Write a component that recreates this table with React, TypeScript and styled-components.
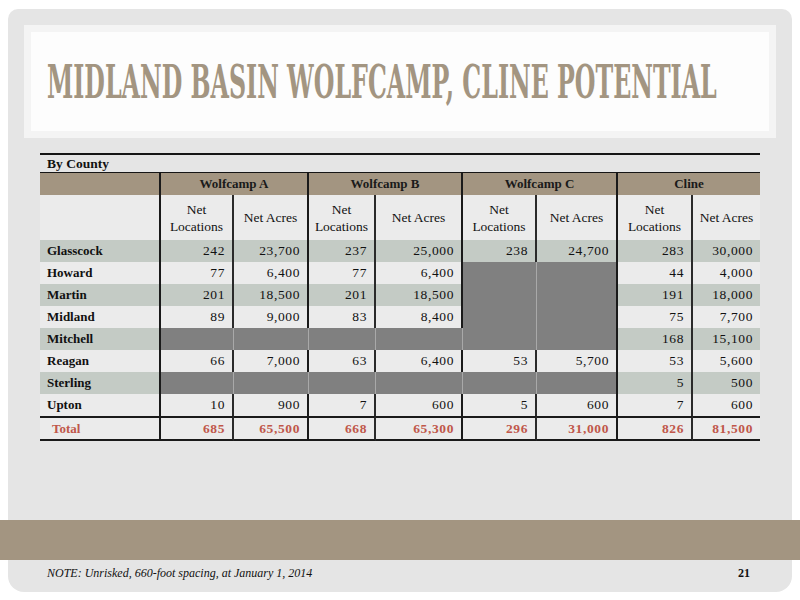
import React from "react";
import styled, { createGlobalStyle } from "styled-components";

const GlobalStyle = createGlobalStyle`
  html, body { margin: 0; padding: 0; background: #ffffff; }
  body { font-family: "Liberation Serif", "Times New Roman", serif; }
`;

const Page = styled.div`
  width: 800px;
  height: 600px;
  box-sizing: border-box;
  padding: 9px 8px 8px 8px;
  overflow: hidden;
`;

const Panel = styled.div`
  height: 583px;
  background: #e5e5e5;
  border-radius: 10px 10px 16px 16px;
  display: flex;
  flex-direction: column;
  padding-top: 16px;
  box-sizing: border-box;
`;

const TitleBox = styled.div`
  margin: 0 16px;
  height: 113px;
  box-sizing: border-box;
  border: 7px solid #f4f4f4;
  background: #fdfdfd;
  display: flex;
  align-items: center;
  padding-left: 16px;
  overflow: hidden;
`;

const Title = styled.h1`
  margin: 0;
  display: inline-block;
  white-space: nowrap;
  font-family: "DejaVu Serif Condensed", "DejaVu Serif", serif;
  font-weight: 700;
  font-size: 46px;
  line-height: 1;
  color: #a39581;
  transform: scaleX(0.573);
  transform-origin: left center;
`;

const Grid = styled.div`
  margin: 15px 32px 0 32px;
  display: grid;
  grid-template-columns: 121px 73px 75px 67px 87px 74px 81px 75px 67px;
  grid-template-rows: 20px 22px 45px repeat(8, 22px) 25px;
  color: #111;
`;

const Caption = styled.div`
  grid-column: 1 / -1;
  box-sizing: border-box;
  border-top: 2px solid #151515;
  border-bottom: 1px solid #151515;
  font-weight: 700;
  font-size: 13.5px;
  padding-left: 7px;
  display: flex;
  align-items: center;
`;

const GroupHead = styled.div<{ $span?: number; $last?: boolean }>`
  grid-column: span ${(p) => p.$span ?? 1};
  background: #a39581;
  box-sizing: border-box;
  border-right: ${(p) => (p.$last ? "none" : "2px solid #1a1a1a")};
  font-weight: 700;
  font-size: 13px;
  display: flex;
  align-items: center;
  justify-content: center;
  color: #1a1a1a;
`;

const SubHead = styled.div<{ $edge?: "group" | "inner" | "none" }>`
  background: #ebebeb;
  box-sizing: border-box;
  border-right: ${(p) =>
    p.$edge === "none" ? "none" : p.$edge === "inner" ? "2px solid #2a2a2a" : "2px solid #1a1a1a"};
  display: flex;
  align-items: center;
  justify-content: center;
  text-align: center;
  line-height: 17px;
  font-size: 13.5px;
`;

const Cell = styled.div<{
  $stripe: boolean;
  $dark?: boolean;
  $edge: "group" | "inner" | "none" | "seam";
  $label?: boolean;
  $total?: boolean;
}>`
  box-sizing: border-box;
  background: ${(p) => (p.$dark ? "#808080" : p.$stripe ? "#c4cbc5" : "#ebebeb")};
  border-right: ${(p) =>
    p.$edge === "none"
      ? "none"
      : p.$edge === "seam"
      ? "1px solid #a9a9a9"
      : p.$edge === "inner"
      ? "2px solid #2a2a2a"
      : "2px solid #1a1a1a"};
  border-top: ${(p) => (p.$total ? "2px solid #1a1a1a" : "none")};
  border-bottom: ${(p) => (p.$total ? "2px solid #1a1a1a" : "none")};
  display: flex;
  align-items: center;
  justify-content: ${(p) => (p.$label ? "flex-start" : "flex-end")};
  padding: ${(p) => (p.$label ? (p.$total ? "0 0 0 12px" : "0 0 0 7px") : "0 7px 0 0")};
  font-weight: ${(p) => (p.$label || p.$total ? 700 : 400)};
  color: ${(p) => (p.$total ? "#c0574a" : "#111")};
  letter-spacing: ${(p) => (p.$label ? "0" : "0.6px")};
  font-size: ${(p) => (p.$label ? "13px" : "13.5px")};
`;

const Band = styled.div`
  margin: auto -8px 0 -8px;
  height: 40px;
  background: #a39581;
`;

const Footer = styled.div`
  height: 32px;
  display: flex;
  align-items: center;
  justify-content: space-between;
  padding: 0 42px 6px 39px;
  box-sizing: border-box;
  font-size: 12px;
  color: #111;
`;

const Note = styled.span`
  font-style: italic;
`;

const PageNum = styled.span`
  font-weight: 700;
`;

type Val = string | null;

const rows: { name: string; vals: Val[] }[] = [
  { name: "Glasscock", vals: ["242", "23,700", "237", "25,000", "238", "24,700", "283", "30,000"] },
  { name: "Howard", vals: ["77", "6,400", "77", "6,400", null, null, "44", "4,000"] },
  { name: "Martin", vals: ["201", "18,500", "201", "18,500", null, null, "191", "18,000"] },
  { name: "Midland", vals: ["89", "9,000", "83", "8,400", null, null, "75", "7,700"] },
  { name: "Mitchell", vals: [null, null, null, null, null, null, "168", "15,100"] },
  { name: "Reagan", vals: ["66", "7,000", "63", "6,400", "53", "5,700", "53", "5,600"] },
  { name: "Sterling", vals: [null, null, null, null, null, null, "5", "500"] },
  { name: "Upton", vals: ["10", "900", "7", "600", "5", "600", "7", "600"] },
];

const totals = ["685", "65,500", "668", "65,300", "296", "31,000", "826", "81,500"];

const groups = ["Wolfcamp A", "Wolfcamp B", "Wolfcamp C", "Cline"];

function edgeFor(i: number, vals: Val[]): "group" | "inner" | "none" | "seam" {
  if (i === 7) return "none";
  const here = vals[i] === null;
  const next = vals[i + 1] === null;
  if (here && next) return "seam";
  return i % 2 === 1 ? "group" : "inner";
}

export default function App() {
  return (
    <>
      <GlobalStyle />
      <Page>
        <Panel>
          <TitleBox>
            <Title>MIDLAND BASIN WOLFCAMP, CLINE POTENTIAL</Title>
          </TitleBox>
          <Grid>
            <Caption>By County</Caption>
            <GroupHead />
            {groups.map((g, i) => (
              <GroupHead key={g} $span={2} $last={i === groups.length - 1}>
                {g}
              </GroupHead>
            ))}
            <SubHead />
            {groups.map((g, i) => (
              <React.Fragment key={g}>
                <SubHead $edge="inner">
                  Net
                  <br />
                  Locations
                </SubHead>
                <SubHead $edge={i === groups.length - 1 ? "none" : "group"}>Net Acres</SubHead>
              </React.Fragment>
            ))}
            {rows.map((r, ri) => (
              <React.Fragment key={r.name}>
                <Cell $stripe={ri % 2 === 0} $edge="group" $label>
                  {r.name}
                </Cell>
                {r.vals.map((v, i) => (
                  <Cell key={i} $stripe={ri % 2 === 0} $dark={v === null} $edge={edgeFor(i, r.vals)}>
                    {v}
                  </Cell>
                ))}
              </React.Fragment>
            ))}
            <Cell $stripe={false} $edge="group" $label $total>
              Total
            </Cell>
            {totals.map((t, i) => (
              <Cell key={i} $stripe={false} $edge={i === 7 ? "none" : i % 2 === 1 ? "group" : "inner"} $total>
                {t}
              </Cell>
            ))}
          </Grid>
          <Band />
          <Footer>
            <Note>NOTE: Unrisked, 660-foot spacing, at January 1, 2014</Note>
            <PageNum>21</PageNum>
          </Footer>
        </Panel>
      </Page>
    </>
  );
}
